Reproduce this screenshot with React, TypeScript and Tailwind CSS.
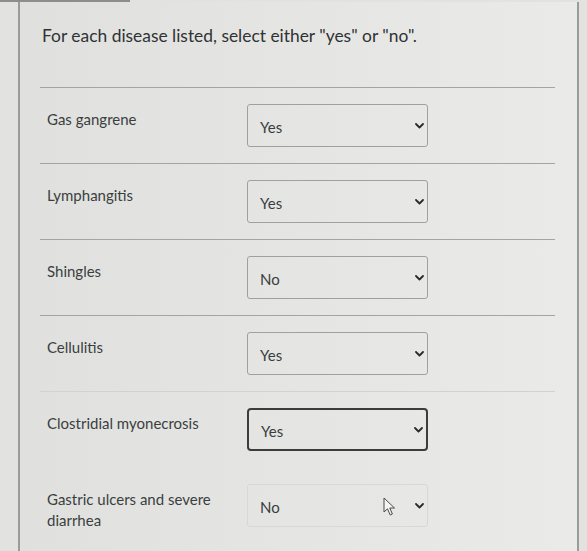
import React from "react";

const rows: { label: string[]; value: string; variant?: "focus" | "faint"; line?: string }[] = [
  { label: ["Gas gangrene"], value: "Yes" },
  { label: ["Lymphangitis"], value: "Yes" },
  { label: ["Shingles"], value: "No" },
  { label: ["Cellulitis"], value: "Yes" },
  { label: ["Clostridial myonecrosis"], value: "Yes", variant: "focus", line: "faint" },
  { label: ["Gastric ulcers and severe", "diarrhea"], value: "No", variant: "faint", line: "none" },
];

function Chevron() {
  return (
    <svg width="9" height="6" viewBox="0 0 9 6" className="block">
      <path d="M1 1 L4.5 4.5 L8 1" fill="none" stroke="#2b2b2b" strokeWidth="1.8" strokeLinecap="round" strokeLinejoin="round" />
    </svg>
  );
}

function Cursor() {
  return (
    <svg width="14" height="20" viewBox="0 0 14 20">
      <path d="M1 1 L1 15 L4.5 11.8 L7.2 18 L9.4 17 L6.8 11 L11.5 11 Z" fill="#f4f4f2" stroke="#4a4a4a" strokeWidth="1" strokeLinejoin="round" />
    </svg>
  );
}

export default function App() {
  return (
    <div
      className="w-[587px] h-[551px] overflow-hidden bg-[#e2e3e0] flex flex-col relative"
      style={{ fontFamily: "Lato, 'Open Sans', sans-serif" }}
    >
      <div className="w-[130px] h-[2px] bg-[#8c8e8d] shrink-0" />
      <div className="ml-[18px] w-[561px] flex-1 border-x-2 border-[#9a9c9b] bg-gradient-to-r from-[#e0e1de] to-[#eaebe8] pl-[20px] pr-[22px]">
        <div className="pt-[22px] h-[85px] text-[17.4px] leading-[24px] text-[#2f3234] pl-[2px]">
          For each disease listed, select either "yes" or "no".
        </div>
        {rows.map((r, i) => (
          <div
            key={i}
            className={
              r.line === "none"
                ? "border-t border-transparent"
                : r.line === "faint"
                ? "border-t border-[#d2d3d0]"
                : "border-t border-[#a3a5a4]"
            }
          >
            <div className="flex py-[16px]">
              <div className="w-[207px] pl-[7px] pt-[5px] text-[15px] leading-[21px] text-[#3b3e40]">
                {r.label.map((l, j) => (
                  <div key={j}>{l}</div>
                ))}
              </div>
              <div
                className={
                  "w-[181px] h-[43px] rounded-[3px] flex items-center justify-between pl-[12px] pr-[3px] " +
                  (r.variant === "focus"
                    ? "border-2 border-[#3a3c3d] rounded-[4px]"
                    : r.variant === "faint"
                    ? "border border-[#d8d9d6]"
                    : "border border-[#9fa1a1]")
                }
              >
                <span className="text-[15px] text-[#3a3d3f] pt-[3px]">{r.value}</span>
                <div className="relative flex items-center">
                  {r.variant === "faint" && (
                    <div className="absolute right-[27px] top-[-6px]">
                      <Cursor />
                    </div>
                  )}
                  <Chevron />
                </div>
              </div>
            </div>
          </div>
        ))}
      </div>
    </div>
  );
}
